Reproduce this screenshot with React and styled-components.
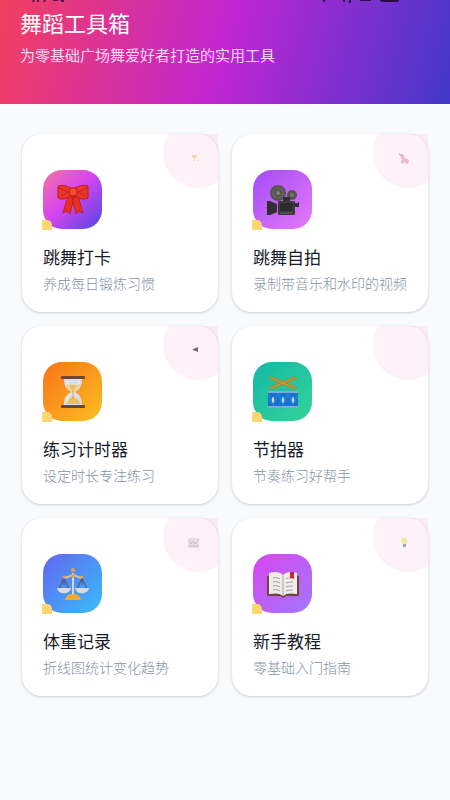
import styled, { createGlobalStyle, css } from 'styled-components'

const GlobalStyle = createGlobalStyle`
    *{
        box-sizing: border-box;
    }

    body{
        margin: 0;
        background: #f9fafc;
        font-family: "Noto Sans CJK SC", sans-serif;
    }
`;

const Header = styled.header`
    display: flex;
    flex-direction: column;
    padding: 0 20px 38px;
    color: #fff;
    background: linear-gradient(105deg, #f43f5e 0%, #c026d3 50%, #4338ca 100%);
`;

const StatusBar = styled.div`
    display: flex;
    justify-content: space-between;
    height: 6px;
    padding: 0 28px 0 10px;
    color: #2a0c4a;
`;

const Title = styled.h1`
    margin: 0;
    font-size: 22px;
    font-weight: 400;
    line-height: 32px;
`;

const Subtitle = styled.p`
    margin: 6px 0 0;
    font-size: 15px;
    font-weight: 400;
    line-height: 22px;
    color: #f8d8f6;
`;

const Grid = styled.main`
    display: grid;
    grid-template-columns: 1fr 1fr;
    gap: 14px;
    padding: 30px 22px;
`;

const Card = styled.a`
    position: relative;
    display: flex;
    flex-direction: column;
    align-items: flex-start;
    padding: 36px 12px 19px 21px;
    border-radius: 20px;
    background: #fff;
    box-shadow: 0 1px 3px rgba(30, 41, 59, 0.22);
    color: inherit;
    text-decoration: none;
`;

const Corner = styled.div`
    position: absolute;
    inset: 0;
    overflow: hidden;
`;

const Circle = styled.div`
    position: absolute;
    top: -16px;
    right: -15px;
    display: flex;
    align-items: center;
    justify-content: center;
    width: 70px;
    height: 70px;
    padding: 12px 8px 0 0;
    border-radius: 50%;
    background: rgba(236, 72, 170, 0.08);
`;

const Tile = styled.div`
    position: relative;
    display: flex;
    align-items: center;
    justify-content: center;
    width: 59px;
    height: 59px;
    border-radius: 19px;
    ${({ $colors }) => css`
        background: linear-gradient(135deg, ${$colors});
    `}

    &::after{
        content: '';
        position: absolute;
        left: -1px;
        bottom: -1px;
        width: 10px;
        height: 10px;
        border-top-right-radius: 5px;
        background: #fdd670;
    }
`;

const Name = styled.h2`
    margin: 14px 0 0;
    font-size: 17px;
    font-weight: 400;
    line-height: 28px;
    color: #171c2a;
`;

const Note = styled.p`
    margin: 2px 0 0;
    font-size: 14px;
    font-weight: 300;
    line-height: 20px;
    white-space: nowrap;
    color: #8592a5;
`;

const StatusLeft = () => (
    <svg width="38" height="3" viewBox="0 0 38 3" fill="currentColor" opacity="0.8">
        <path d="M3 0h2l-1 2H2zM7 0h2v2H7zM14 0h2l-1 2h-2zM23 0h5v1h-5zM30 0h4v2h-2z" />
    </svg>
)

const StatusRight = () => (
    <svg width="80" height="3" viewBox="0 0 80 3" fill="currentColor">
        <path d="M1 0h3L2 2H1zM21 0h2v2h-2zM27 0h2v3h-2zM38 0h11v1H38zM58 0h19v1l-2 1H60l-2-1z" />
    </svg>
)

const Bow = () => (
    <svg width="32" height="32" viewBox="0 0 32 32">
        <path d="M11 12 6 29l4-2 3 3 4-17zM21 12l5 17-4-2-3 3-4-17z" fill="#e92f20" stroke="#c3221f" />
        <path d="M14 4C9 1 4 1 1 2v12c4 2 9 1 13-2zM18 4c5-3 10-3 13-2v12c-4 2-9 1-13-2z" fill="#ee3522" stroke="#b31d25" />
        <path d="m2 4 9 4-7 4M30 4l-9 4 7 4" fill="none" stroke="#bb242b" strokeWidth="1" />
        <rect x="12" y="4" width="8" height="8" rx="3" fill="#f24a2a" stroke="#b31d25" />
    </svg>
)

const Camera = () => (
    <svg width="32" height="32" viewBox="0 0 32 32">
        <circle cx="11" cy="9" r="8" fill="#555452" />
        <circle cx="11" cy="9" r="5" fill="none" stroke="#646260" strokeWidth="2" />
        <circle cx="11" cy="9" r="2" fill="#83806f" />
        <circle cx="25" cy="11" r="5" fill="#565553" />
        <circle cx="25" cy="11" r="2" fill="#77756c" />
        <path d="M0 17h3l7 3v8l-7 3H0z" fill="#302e31" />
        <rect x="11" y="17" width="17" height="14" rx="1" fill="#3b393b" />
        <path d="M13 19h12v8H13z" fill="#2c2a2d" />
        <path d="M16 13h7v4h-7zM28 19h3v-1h1v5h-4z" fill="#302e31" />
        <path d="M13 29h12" stroke="#696462" />
    </svg>
)

const Hourglass = () => (
    <svg width="32" height="32" viewBox="0 0 32 32">
        <path d="M7 3h18c0 7-2 10-7 13 5 3 7 6 7 13H7c0-7 2-10 7-13-5-3-7-6-7-13z" fill="#d9dfe5" />
        <path d="M9 9c4-1 10 1 14-1-1 4-4 6-7 8-3-1-6-4-7-7zM9 28c0-5 5-5 7-8 2 3 7 3 7 8z" fill="#f0bb62" />
        <path d="M16 14v9" stroke="#e9a13c" strokeWidth="1" />
        <path d="M10 5c1 6 3 8 5 10M22 5c-1 6-3 8-5 10M10 27c0-5 2-7 4-9" fill="none" stroke="#f1f5f7" />
        <rect x="4" y="0" width="24" height="3" rx="1" fill="#6e4534" />
        <rect x="4" y="29" width="24" height="3" rx="1" fill="#6e4534" />
    </svg>
)

const Drum = () => (
    <svg width="32" height="32" viewBox="0 0 32 32">
        <path d="m4 2 24 10M28 2 4 12" stroke="#a88a2c" strokeWidth="3" strokeLinecap="round" />
        <path d="m4 2 24 10M28 2 4 12" stroke="#d59a2f" strokeLinecap="round" />
        <rect x="1" y="16" width="30" height="15" fill="#1674d1" />
        <path d="m1 17 5 13 5-13 5 13 5-13 5 13 5-13" fill="none" stroke="#2584dc" />
        <path d="M1 15h30v2H1zM1 30h30v2H1z" fill="#86a9c9" />
        <path d="m6 21 1 3-1 3-1-3zM16 21l1 3-1 3-1-3zM26 21l1 3-1 3-1-3z" fill="#e7f0d6" stroke="#e7f0d6" strokeWidth="0.5" />
    </svg>
)

const Scale = () => (
    <svg width="32" height="32" viewBox="0 0 32 32">
        <path d="m7 10-5 11M7 10l5 11M25 10l-5 11M25 10l5 11M7 10v7M25 10v7" stroke="#515b89" strokeWidth="1.2" />
        <path d="M7 9c4 2 6-2 9-2s5 4 9 2" fill="none" stroke="#d3c3ad" strokeWidth="2" />
        <path d="M16 5v23" stroke="#d6d6df" strokeWidth="2" />
        <path d="M0 20h14c-1 7-13 7-14 0zM18 20h14c-1 7-13 7-14 0z" fill="#d9dae3" />
        <path d="M8 32c1-5 4-6 8-6s7 1 8 6z" fill="#f2a92c" />
        <circle cx="16" cy="2" r="2" fill="#e6a43b" />
        <circle cx="16" cy="8" r="2" fill="#e6a43b" />
        <circle cx="7" cy="9" r="1.5" fill="#e6a43b" />
        <circle cx="25" cy="9" r="1.5" fill="#e6a43b" />
    </svg>
)

const Book = () => (
    <svg width="32" height="32" viewBox="0 0 32 32">
        <path d="M0 8h32v20H19l-3 2-3-2H0z" fill="#70463d" />
        <path d="M2 5c6-2 11-1 14 2 3-3 8-4 14-2v21c-6-1-11-1-14 2-3-3-8-3-14-2z" fill="#efedeb" />
        <path d="M16 7v20" stroke="#aaa39e" />
        <path d="M6 10c3-1 5 0 7 1M6 14c3-1 5 0 7 1M6 18c3-1 5 0 7 1M6 22c3-1 5 0 7 1M19 11c1-1 2-1 3-1M19 15c3-1 4-1 7-1M19 19c3-1 4-1 7-1M19 23c3-1 4-1 7-1" fill="none" stroke="#a29f9d" />
        <path d="M23 4h4v7l-2-1-2 1z" fill="#d42232" />
    </svg>
)

const Trophy = () => (
    <svg width="12" height="12" viewBox="0 0 12 12" opacity="0.7">
        <path d="M4 2h5v1L7 5v3H6V5L4 4zM10 7h1v1h-1z" fill="#eac779" />
    </svg>
)

const Ribbon = () => (
    <svg width="12" height="12" viewBox="0 0 12 12" opacity="0.55">
        <path d="m1 1 4 1 1 3 4 2v3H8L7 8l-2 2-2-1 2-2-2-4z" fill="#e9a3ba" stroke="#df6f91" strokeWidth="1" />
    </svg>
)

const Speaker = () => (
    <svg width="12" height="12" viewBox="0 0 12 12">
        <path d="m5 4 5-2v5L5 5z" fill="#78657a" />
    </svg>
)

const Chart = () => (
    <svg width="12" height="12" viewBox="0 0 12 12" opacity="0.6">
        <rect x="0" y="1" width="11" height="10" fill="#ddd0d8" />
        <path d="m1 3 2 4 2-3 2 3 4-5M1 9h10" fill="none" stroke="#aa9ca8" />
    </svg>
)

const Bulb = () => (
    <svg width="12" height="12" viewBox="0 0 12 12">
        <path d="M4 1h4l1 3-1 3H5L3 4z" fill="#f8df82" opacity="0.8" />
        <path d="M5 7h3v3H5z" fill="#9aa8b5" />
    </svg>
)

const tools = [
    { name: '跳舞打卡', note: '养成每日锻炼习惯', icon: <Bow />, mark: <Trophy />, colors: '#f472a0, #d946ef 45%, #4f46e5' },
    { name: '跳舞自拍', note: '录制带音乐和水印的视频', icon: <Camera />, mark: <Ribbon />, colors: '#a04cf5, #e879f9' },
    { name: '练习计时器', note: '设定时长专注练习', icon: <Hourglass />, mark: <Speaker />, colors: '#f97316, #fbbf24' },
    { name: '节拍器', note: '节奏练习好帮手', icon: <Drum />, mark: null, colors: '#14b8a6, #34d399' },
    { name: '体重记录', note: '折线图统计变化趋势', icon: <Scale />, mark: <Chart />, colors: '#6366f1, #38bdf8' },
    { name: '新手教程', note: '零基础入门指南', icon: <Book />, mark: <Bulb />, colors: '#d946ef, #a078fa' },
]

const App = () => {
    return (
        <>
            <GlobalStyle />
            <Header>
                <StatusBar>
                    <StatusLeft />
                    <StatusRight />
                </StatusBar>
                <Title>舞蹈工具箱</Title>
                <Subtitle>为零基础广场舞爱好者打造的实用工具</Subtitle>
            </Header>
            <Grid>
                {tools.map(tool => (
                    <Card href="#" key={tool.name}>
                        <Corner>
                            <Circle>{tool.mark}</Circle>
                        </Corner>
                        <Tile $colors={tool.colors}>{tool.icon}</Tile>
                        <Name>{tool.name}</Name>
                        <Note>{tool.note}</Note>
                    </Card>
                ))}
            </Grid>
        </>
    )
}

export default App
